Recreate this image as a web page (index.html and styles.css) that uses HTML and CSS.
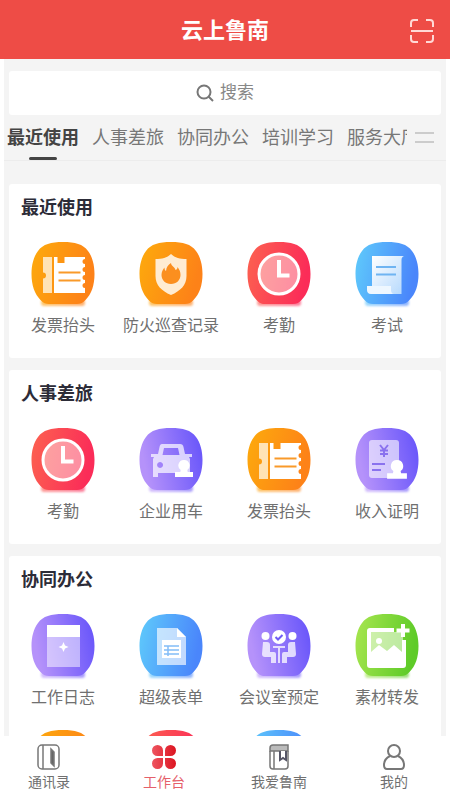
FILE: index.html
```
<!DOCTYPE html>
<html lang="zh-CN">
<head>
  <meta charset="UTF-8">
  <meta name="viewport" content="width=device-width, initial-scale=1.0">
  <title>云上鲁南</title>
  <link rel="stylesheet" href="styles.css">
</head>
<body>
  <svg class="sprite" aria-hidden="true">
    <defs>
      <linearGradient id="orange" x1="0" y1="0" x2="1" y2="0.3"><stop offset="0" stop-color="#fdab0c"/><stop offset="1" stop-color="#fd8218"/></linearGradient>
      <linearGradient id="red" x1="0" y1="0" x2="1" y2="0.2"><stop offset="0" stop-color="#fc6250"/><stop offset="1" stop-color="#fb2c58"/></linearGradient>
      <linearGradient id="blue" x1="0" y1="0" x2="1" y2="0.2"><stop offset="0" stop-color="#5fcbfb"/><stop offset="1" stop-color="#4a86fb"/></linearGradient>
      <linearGradient id="purple" x1="0" y1="0.2" x2="1" y2="0"><stop offset="0" stop-color="#b592fa"/><stop offset="1" stop-color="#6452fa"/></linearGradient>
      <linearGradient id="green" x1="0" y1="0" x2="1" y2="0.2"><stop offset="0" stop-color="#a9e650"/><stop offset="1" stop-color="#5ecb28"/></linearGradient>
      <linearGradient id="paper" x1="0" y1="0" x2="1" y2="1"><stop offset="0" stop-color="#fff"/><stop offset="1" stop-color="#b4d8fd"/></linearGradient>
      <linearGradient id="petal" x1="0" y1="0" x2="1" y2="0"><stop offset="0" stop-color="#ee5560"/><stop offset="1" stop-color="#dc1420"/></linearGradient>
      <filter id="soft" x="-20%" y="-100%" width="140%" height="300%"><feGaussianBlur stdDeviation="1.2"/></filter>
    </defs>

    <symbol id="base" viewBox="0 0 64 66">
      <rect x="10" y="57" width="44" height="7" rx="3" opacity=".6" filter="url(#soft)"/>
      <path d="M32 0C44 0 52 2 57 9c4.500 6 6.500 14 6.500 23 0 11-3 20-9 26-3 3-5 4-8.500 4H18c-3.500 0-5.500-1-8.500-4C3.500 52 .5 43 .5 32 .5 23 2.500 15 7 9 12 2 20 0 32 0z"/>
    </symbol>

    <symbol id="stamp" viewBox="0 0 20 18">
      <path fill="#fff" d="M10 0a5.500 5.500 0 0 1 3.300 10l.4 2H19v5H1v-5h5.300l.4-2A5.500 5.500 0 0 1 10 0z"/>
    </symbol>

    <!-- 发票抬头 -->
    <symbol id="invoice" viewBox="0 0 64 66">
      <use href="#base" width="64" height="66" fill="url(#orange)"/>
      <path fill="#ffe3b5" d="M12 15h9v36h-9V36.500a3 3 0 0 0 0-6z"/>
      <path fill="#fff" d="M23 15h3.500v6h7v-6H54v2a2.500 2.500 0 0 0 0 5v3a2.500 2.500 0 0 0 0 5v3a2.500 2.500 0 0 0 0 5v3a2.500 2.500 0 0 0 0 5v5H23z"/>
      <path stroke="#f99a2a" stroke-width="2" d="M27.500 30.500h22M27.500 38.500h22"/>
    </symbol>

    <!-- 防火巡查记录 -->
    <symbol id="shield" viewBox="0 0 64 66">
      <use href="#base" width="64" height="66" fill="url(#orange)"/>
      <path fill="#ffecd2" d="M32 12c4 4 9 5 15.500 5v17c0 9-6 15-15.500 19-9.500-4-15.500-10-15.500-19V17C23 17 28 16 32 12z"/>
      <path fill="#fb8f1f" d="M32 21c0 3 4 4 4.500 7 1.500-.5 2-1.500 2-3 2 2.500 3 5 3 8 0 5-4 9-9.500 9s-9.500-4-9.500-9c0-3.500 1.500-5.500 3-7.500 0 2 .5 3 1.500 3.500C27.500 25 29 23 32 21z"/>
    </symbol>

    <!-- 考勤 -->
    <symbol id="clock" viewBox="0 0 64 66">
      <use href="#base" width="64" height="66" fill="url(#red)"/>
      <circle cx="32" cy="32" r="20" fill="#fff" fill-opacity=".45" stroke="#fff" stroke-width="3"/>
      <path fill="none" stroke="#fff" stroke-width="4" d="M32 18v15.500h10.500"/>
    </symbol>

    <!-- 考试 -->
    <symbol id="exam" viewBox="0 0 64 66">
      <use href="#base" width="64" height="66" fill="url(#blue)"/>
      <path fill="url(#paper)" d="M17 14h32c-2 1-2.500 2-2.500 4v34H17z"/>
      <path fill="#eef7ff" d="M12 44h24v4c0 2 1 4 3 4H16c-3 0-4-2-4-4z"/>
      <path stroke="#6fb4f2" stroke-width="2" d="M21 25h20M21 32.500h20"/>
    </symbol>

    <!-- 企业用车 -->
    <symbol id="car" viewBox="0 0 64 66">
      <use href="#base" width="64" height="66" fill="url(#purple)"/>
      <path fill="#fff" fill-opacity=".7" fill-rule="evenodd" d="M23 16h18q3 0 3.500 3l1.500 7h7v3h-3l1 2v18h-5v-4H19v4h-5V31l1-2h-3v-3h7l1.500-7q.5-3 2.500-3zm2 4-1.500 7h17l-1.500-7zM21 34a3 3 0 1 0 .1 0z"/>
      <use href="#stamp" x="35" y="32" width="20" height="18"/>
    </symbol>

    <!-- 收入证明 -->
    <symbol id="income" viewBox="0 0 64 66">
      <use href="#base" width="64" height="66" fill="url(#purple)"/>
      <rect x="14" y="12" width="30" height="38" rx="3" fill="#fff" fill-opacity=".6"/>
      <path fill="none" stroke="#8a72ee" stroke-width="2" d="m25 17 4 5 4-5M29 22v7M25 22.500h8M25 26h8M17 36h13M17 42h9"/>
      <use href="#stamp" x="31" y="31" width="22" height="22"/>
    </symbol>

    <!-- 工作日志 -->
    <symbol id="diary" viewBox="0 0 64 66">
      <use href="#base" width="64" height="66" fill="url(#purple)"/>
      <path fill="#fff" fill-opacity=".5" d="M16 23h33v30H16z"/>
      <path fill="#fff" d="M16 11h33v12H16zM32.500 28l1.500 3.500 3.500 1.500-3.500 1.500-1.500 3.500-1.500-3.500-3.500-1.500 3.500-1.500z"/>
    </symbol>

    <!-- 超级表单 -->
    <symbol id="form" viewBox="0 0 64 66">
      <use href="#base" width="64" height="66" fill="url(#blue)"/>
      <path fill="#fff" fill-opacity=".65" d="M18 14h20l9 9v28H18z"/>
      <path fill="#fff" d="M38 14v9h9zM23 26h19v18H23z"/>
      <path stroke="#83bdf8" stroke-width="1.500" d="M25 32h15M25 36h15M25 40h15M29 32v10"/>
    </symbol>

    <!-- 会议室预定 -->
    <symbol id="meeting" viewBox="0 0 64 66">
      <use href="#base" width="64" height="66" fill="url(#purple)"/>
      <g fill="#fff">
        <circle cx="18.500" cy="22" r="4"/>
        <circle cx="45.500" cy="22" r="4"/>
        <circle cx="32" cy="23" r="7"/>
      </g>
      <path fill="none" stroke="#6f5cf5" stroke-width="2" d="m28.500 23 2.500 2.500 4.500-4.500"/>
      <g fill="#fff" fill-opacity=".75">
        <path d="M16 28h4q3 0 3 3v7h4q2 0 2 2v9h-5v-6h-6q-3 0-3-3z"/>
        <path d="M48 28h-4q-3 0-3 3v7h-4q-2 0-2 2v9h5v-6h6q3 0 3-3z"/>
        <path d="M26 32h12v2h-5v15h-2V34h-5z"/>
      </g>
    </symbol>

    <!-- 素材转发 -->
    <symbol id="media" viewBox="0 0 64 66">
      <use href="#base" width="64" height="66" fill="url(#green)"/>
      <path fill="#fff" fill-opacity=".55" d="M15 18h33v24H15z"/>
      <path fill="#fff" fill-rule="evenodd" d="M15 14h24v4H16v20l8-7 8 6 7-6 8 7V26h4v25q0 3-3 3H15q-3 0-3-3V17q0-3 3-3z"/>
      <circle cx="24" cy="27" r="3" fill="#fff"/>
      <path stroke="#fff" stroke-width="4" d="M48 10v13M41.500 16.500h13"/>
    </symbol>
  </svg>

  <div class="app">
    <header class="header">
      <h1>云上鲁南</h1>
      <button class="scan-btn" aria-label="扫一扫">
        <svg viewBox="0 0 24 24" width="24" height="24" fill="none" stroke="#ffd9d6" stroke-width="2">
          <path d="M1 8V4q0-3 3-3h4M16 1h4q3 0 3 3v4M23 16v4q0 3-3 3h-4M8 23H4q-3 0-3-3v-4M1 12h22"/>
        </svg>
      </button>
    </header>

    <main class="content">
      <button class="search">
        <svg viewBox="0 0 18 18" width="18" height="18" fill="none" stroke="#777" stroke-width="2">
          <circle cx="8" cy="8" r="6.500"/>
          <path d="m12.500 12.500 4.500 4.500"/>
        </svg>
        搜索
      </button>

      <nav class="tabs">
        <div class="tab-list">
          <a href="#recent" class="tab active">最近使用</a>
          <a href="#hr" class="tab">人事差旅</a>
          <a href="#office" class="tab">协同办公</a>
          <a href="#training" class="tab">培训学习</a>
          <a href="#service" class="tab">服务大厅</a>
        </div>
        <button class="more-btn" aria-label="全部分类"></button>
      </nav>

      <section class="card" id="recent">
        <h2>最近使用</h2>
        <div class="grid">
          <a href="#" class="item"><svg><use href="#invoice"/></svg>发票抬头</a>
          <a href="#" class="item"><svg><use href="#shield"/></svg>防火巡查记录</a>
          <a href="#" class="item"><svg><use href="#clock"/></svg>考勤</a>
          <a href="#" class="item"><svg><use href="#exam"/></svg>考试</a>
        </div>
      </section>

      <section class="card" id="hr">
        <h2>人事差旅</h2>
        <div class="grid">
          <a href="#" class="item"><svg><use href="#clock"/></svg>考勤</a>
          <a href="#" class="item"><svg><use href="#car"/></svg>企业用车</a>
          <a href="#" class="item"><svg><use href="#invoice"/></svg>发票抬头</a>
          <a href="#" class="item"><svg><use href="#income"/></svg>收入证明</a>
        </div>
      </section>

      <section class="card" id="office">
        <h2>协同办公</h2>
        <div class="grid">
          <a href="#" class="item"><svg><use href="#diary"/></svg>工作日志</a>
          <a href="#" class="item"><svg><use href="#form"/></svg>超级表单</a>
          <a href="#" class="item"><svg><use href="#meeting"/></svg>会议室预定</a>
          <a href="#" class="item"><svg><use href="#media"/></svg>素材转发</a>
          <a href="#" class="item" aria-label="发票抬头"><svg><use href="#invoice"/></svg></a>
          <a href="#" class="item" aria-label="考勤"><svg><use href="#clock"/></svg></a>
          <a href="#" class="item" aria-label="考试"><svg><use href="#exam"/></svg></a>
        </div>
      </section>
    </main>

    <nav class="bottom-nav">
      <a href="#">
        <svg viewBox="0 0 26 26" fill="none" stroke="#777" stroke-width="1.500">
          <rect x="2" y="1" width="21" height="24" rx="4"/>
          <path d="M7 1v24"/>
          <path fill="#666" d="M15 5l3 3v14l-3-3z"/>
        </svg>
        通讯录
      </a>
      <a href="#" class="active">
        <svg viewBox="0 0 26 26" fill="url(#petal)">
          <path d="M6.500 1A5.500 5.500 0 0 1 12 6.500V12H6.500a5.500 5.500 0 0 1 0-11zM19.500 1a5.500 5.500 0 0 1 0 11H14V6.500A5.500 5.500 0 0 1 19.500 1zM6.500 14H12v5.500A5.500 5.500 0 1 1 6.500 14zM14 14h5.500a5.500 5.500 0 1 1-5.500 5.500z"/>
        </svg>
        工作台
      </a>
      <a href="#">
        <svg viewBox="0 0 26 26" fill="none" stroke="#777" stroke-width="1.500">
          <path fill="#bbb" d="M7 1h15v6H4V4q0-3 3-3z"/>
          <path d="M22 7v15q0 3-3 3H7q-3 0-3-3V7M8 7v18"/>
          <path fill="#fff" stroke="#556" stroke-width="2" d="M14 7v9l3-2 3 2V7"/>
        </svg>
        我爱鲁南
      </a>
      <a href="#">
        <svg viewBox="0 0 26 26" fill="none" stroke="#777" stroke-width="2">
          <circle cx="13" cy="7" r="6"/>
          <path d="M9 12c-4 2-6 5-6 9 0 3 1 4 3 4h14c2 0 3-1 3-4 0-4-2-7-6-9"/>
        </svg>
        我的
      </a>
    </nav>
  </div>
</body>
</html>
```
FILE: styles.css
```
* {
  box-sizing: border-box;
}

body {
  margin: 0;
  font-family: "Liberation Serif", "Noto Sans CJK SC", serif;
  font-size: 16px;
  line-height: 24px;
  color: #707070;
  background-color: #fff;
}

a {
  color: inherit;
  text-decoration: none;
}

button {
  padding: 0;
  border: none;
  background: none;
  font: inherit;
  color: inherit;
  cursor: pointer;
}

.sprite {
  position: absolute;
  width: 0;
  height: 0;
}

.app {
  display: flex;
  flex-direction: column;
  height: 100vh;
}

/* header */
.header {
  display: grid;
  grid-template-columns: 1fr auto 1fr;
  align-items: center;
  flex: none;
  height: 59px;
  padding: 2px 16px 0;
  background-color: #ee4c46;
  color: #fff;
}

.header h1 {
  grid-column: 2;
  margin: 0;
  font-size: 22px;
  font-weight: bold;
}

.scan-btn {
  justify-self: end;
  height: 24px;
}

.scan-btn svg {
  display: block;
}

/* content */
.content {
  flex: 1;
  min-height: 0;
  margin: 0 4px;
  padding-top: 12px;
  background-color: #f4f4f4;
  overflow-y: auto;
  scrollbar-width: none;
}

.search {
  display: flex;
  justify-content: center;
  align-items: center;
  gap: 6px;
  width: calc(100% - 10px);
  height: 44px;
  margin: 0 5px;
  border-radius: 3px;
  background-color: #fff;
  font-size: 17px;
  color: #888;
}

.tabs {
  display: flex;
  align-items: center;
  gap: 8px;
  height: 46px;
  margin-bottom: 23px;
  padding: 0 12px 0 3px;
  border-bottom: 1px solid #ececec;
}

.tab-list {
  display: flex;
  flex: 1;
  gap: 13px;
  min-width: 0;
  overflow: hidden;
}

.tab {
  position: relative;
  flex: none;
  padding: 10px 0;
  font-size: 18px;
  white-space: nowrap;
  color: #777;
}

.tab.active {
  font-weight: bold;
  color: #444;
}

.tab.active::after {
  content: "";
  position: absolute;
  left: 22px;
  right: 22px;
  bottom: 0;
  height: 3px;
  border-radius: 2px;
  background-color: #444;
}

.more-btn {
  width: 19px;
  height: 11px;
  border-top: 2px solid #ccc;
  border-bottom: 2px solid #ccc;
}

.card {
  margin: 0 5px 12px;
  padding: 12px 0 20px;
  border-radius: 3px;
  background-color: #fff;
}

.card h2 {
  margin: 0 12px 22px;
  font-size: 18px;
  line-height: 24px;
  color: #2c2c38;
}

.grid {
  display: grid;
  grid-template-columns: repeat(4, 1fr);
  row-gap: 20px;
}

.item {
  display: flex;
  flex-direction: column;
  align-items: center;
  gap: 6px;
  white-space: nowrap;
}

.item svg {
  width: 64px;
  height: 66px;
}

/* bottom nav */
.bottom-nav {
  display: flex;
  justify-content: space-between;
  flex: none;
  height: 64px;
  padding: 8px 26px 0 19px;
  background-color: #fff;
  font-size: 14px;
}

.bottom-nav a {
  display: flex;
  flex-direction: column;
  align-items: center;
  gap: 1px;
  width: 60px;
  line-height: 24px;
}

.bottom-nav svg {
  width: 26px;
  height: 26px;
}

.bottom-nav .active {
  color: #e5606a;
}
```
